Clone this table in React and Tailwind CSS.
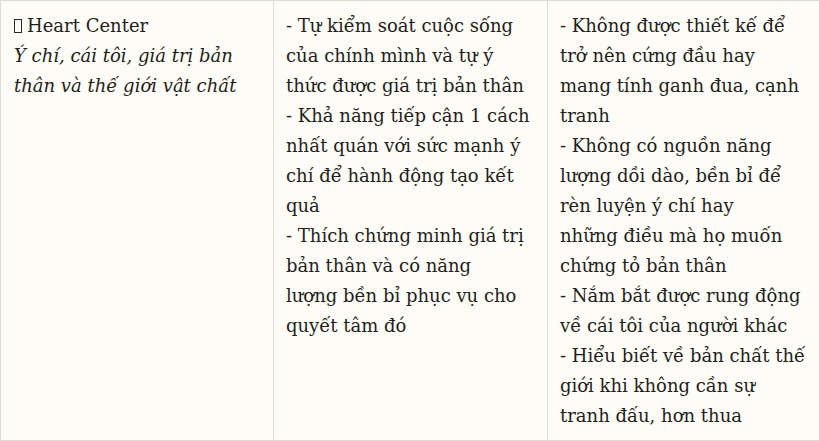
export default function App() {
  // wrapped as in the source page
  const col2 = [
    ['- Tự kiểm soát cuộc sống', 'của chính mình và tự ý', 'thức được giá trị bản thân'],
    ['- Khả năng tiếp cận 1 cách', 'nhất quán với sức mạnh ý', 'chí để hành động tạo kết', 'quả'],
    ['- Thích chứng minh giá trị', 'bản thân và có năng', 'lượng bền bỉ phục vụ cho', 'quyết tâm đó'],
  ]
  const col3 = [
    ['- Không được thiết kế để', 'trở nên cứng đầu hay', 'mang tính ganh đua, cạnh', 'tranh'],
    ['- Không có nguồn năng', 'lượng dồi dào, bền bỉ để', 'rèn luyện ý chí hay', 'những điều mà họ muốn', 'chứng tỏ bản thân'],
    ['- Nắm bắt được rung động', 'về cái tôi của người khác'],
    ['- Hiểu biết về bản chất thế', 'giới khi không cần sự', 'tranh đấu, hơn thua'],
  ]
  return (
    <div className="h-[441px] w-[819px] overflow-hidden bg-[#fdfcf6]">
      <div
        className="grid w-[821px] grid-cols-[272px_274px_275px] border border-[#dddbd3] text-[18px] leading-[30px] text-[#1f1e1b]"
        style={{ fontFamily: '"DejaVu Serif", serif' }}
      >
        <div className="h-[439px] px-[13px] pt-[10px]">
          <div className="flex items-center gap-[5px]">
            <span className="inline-block h-[14px] w-[8px] border border-[#2b2a26]" />
            <span>Heart Center</span>
          </div>
          <div className="italic">
            Ý chí, cái tôi, giá trị bản
            <br />
            thân và thế giới vật chất
          </div>
        </div>
        <div className="whitespace-nowrap border-l border-[#dddbd3] px-[12px] pt-[10px]">
          {col2.map((lines, i) => (
            <div key={i}>
              {lines.map((l) => (
                <div key={l}>{l}</div>
              ))}
            </div>
          ))}
        </div>
        <div className="whitespace-nowrap border-l border-[#dddbd3] px-[12px] pt-[10px]">
          {col3.map((lines, i) => (
            <div key={i}>
              {lines.map((l) => (
                <div key={l}>{l}</div>
              ))}
            </div>
          ))}
        </div>
      </div>
    </div>
  )
}
